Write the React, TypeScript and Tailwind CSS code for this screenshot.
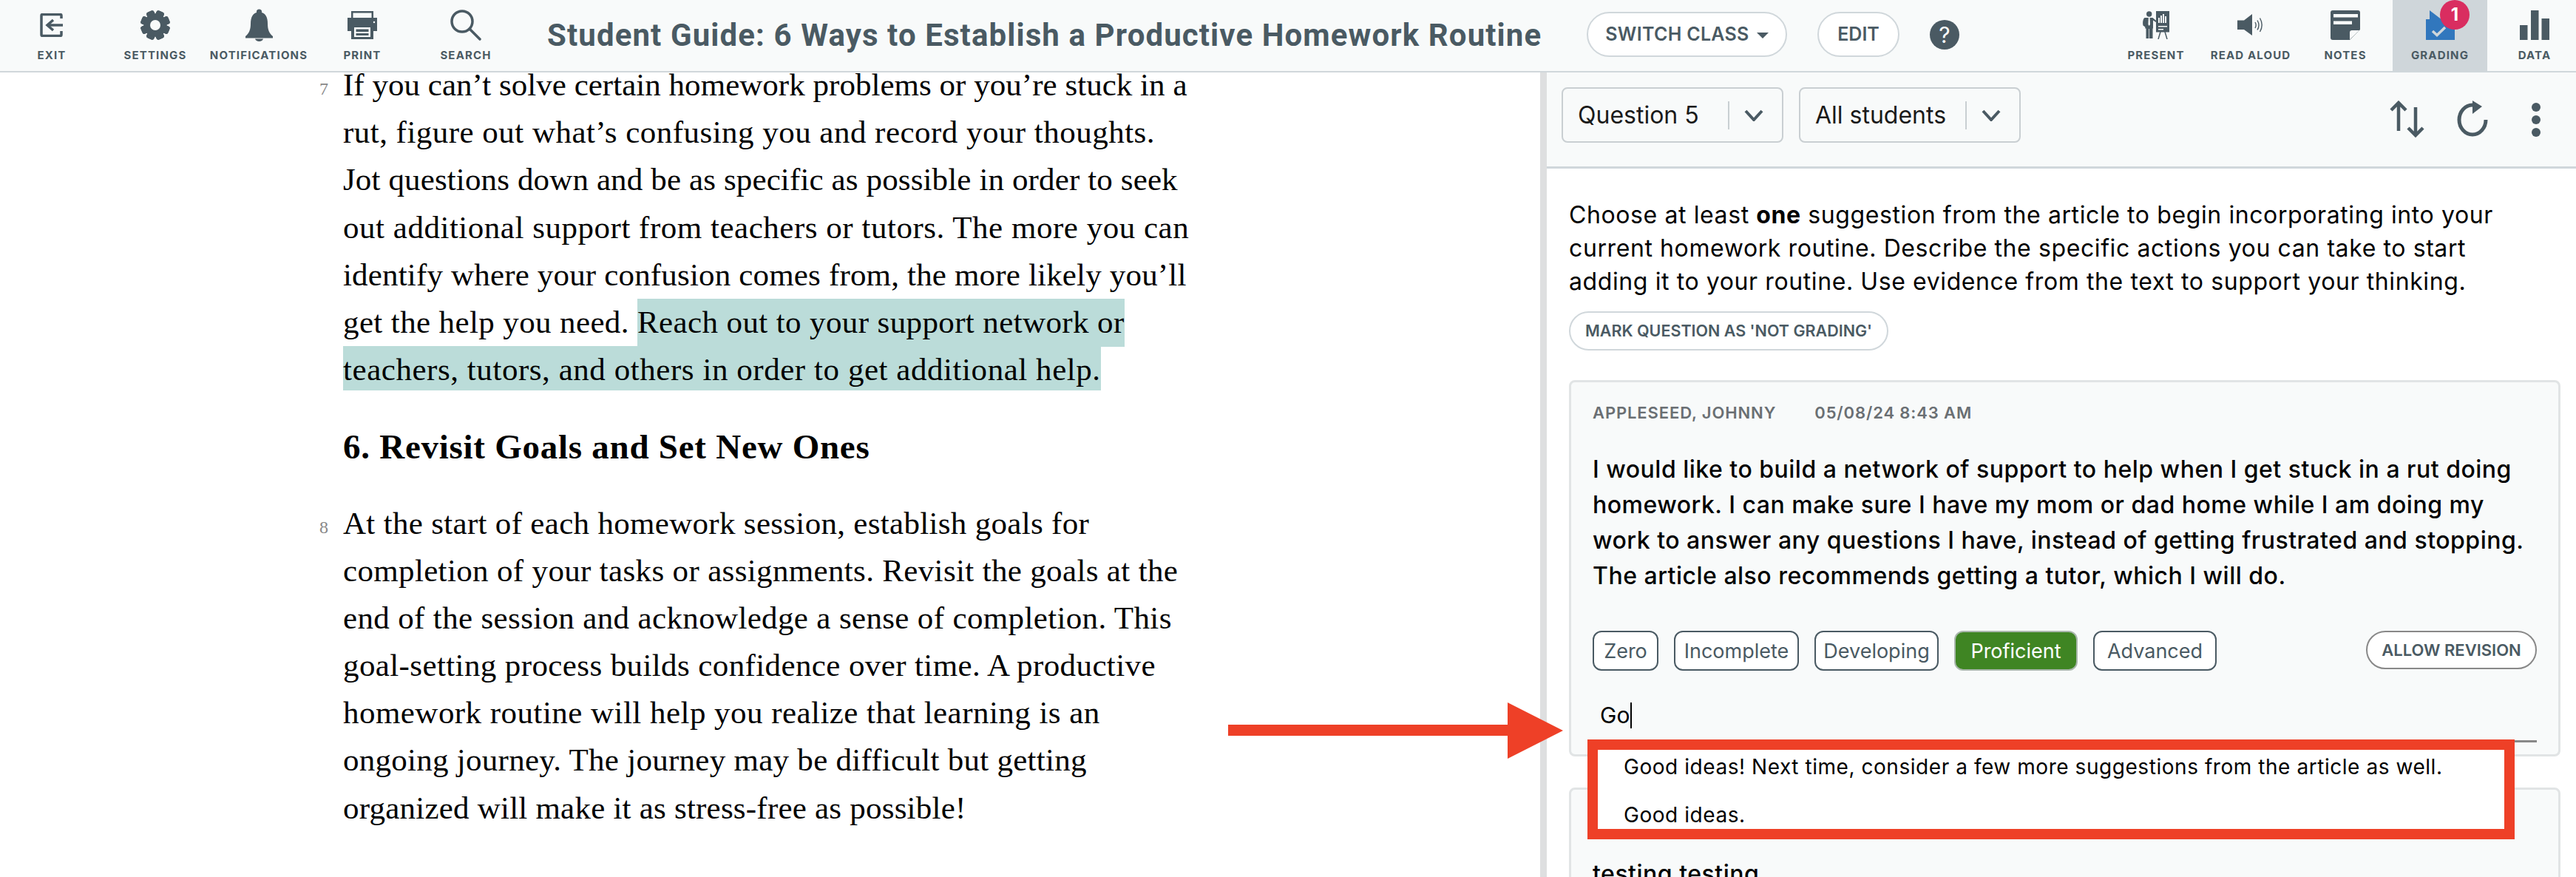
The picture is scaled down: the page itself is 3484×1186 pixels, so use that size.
import type { ReactNode } from 'react';

const SLATE = '#4a5a63';

const PARA_7 = [
  { text: 'If you can’t solve certain homework problems or you’re stuck in a', fit: 'tracking-[0.03px]' },
  { text: 'rut, figure out what’s confusing you and record your thoughts.', fit: 'tracking-[0.47px]' },
  { text: 'Jot questions down and be as specific as possible in order to seek', fit: 'tracking-[0.13px]' },
  { text: 'out additional support from teachers or tutors. The more you can', fit: 'tracking-[0.52px]' },
  { text: 'identify where your confusion comes from, the more likely you’ll', fit: 'tracking-[0.17px]' },
];

const PARA_8 = [
  { text: 'At the start of each homework session, establish goals for', fit: 'tracking-[0.31px]' },
  { text: 'completion of your tasks or assignments. Revisit the goals at the', fit: 'tracking-[0.34px]' },
  { text: 'end of the session and acknowledge a sense of completion. This', fit: 'tracking-[0.35px]' },
  { text: 'goal-setting process builds confidence over time. A productive', fit: 'tracking-[0.39px]' },
  { text: 'homework routine will help you realize that learning is an', fit: 'tracking-[0.46px]' },
  { text: 'ongoing journey. The journey may be difficult but getting', fit: 'tracking-[0.27px]' },
  { text: 'organized will make it as stress-free as possible!', fit: 'tracking-[0.22px]' },
];

const ANSWER = [
  'I would like to build a network of support to help when I get stuck in a rut doing',
  'homework. I can make sure I have my mom or dad home while I am doing my',
  'work to answer any questions I have, instead of getting frustrated and stopping.',
  'The article also recommends getting a tutor, which I will do.',
];

const PROMPT_LINE_2 = 'current homework routine. Describe the specific actions you can take to start';
const PROMPT_LINE_3 = 'adding it to your routine. Use evidence from the text to support your thinking.';

function ExitIcon() {
  return (
    <svg width="32" height="32" viewBox="0 0 32 32" fill="none" stroke={SLATE} strokeWidth="3.5">
      <path d="M29 7V3a1.5 1.5 0 0 0-1.5-1.5h-24A1.5 1.5 0 0 0 2 3v26a1.5 1.5 0 0 0 1.5 1.5h24A1.5 1.5 0 0 0 29 29v-5" />
      <path d="M31 16H10" />
      <path d="M18 9l-8 7 8 7" />
    </svg>
  );
}

function GearIcon() {
  const teeth = [0, 45, 90, 135, 180, 225, 270, 315];
  return (
    <svg width="40" height="40" viewBox="0 0 40 40" fill={SLATE}>
      {teeth.map((a) => (
        <rect key={a} x="14.5" y="0" width="11" height="40" rx="3" transform={`rotate(${a + 22.5} 20 20)`} />
      ))}
      <circle cx="20" cy="20" r="15.5" />
      <circle cx="20" cy="20" r="7" fill="#f8fafa" />
    </svg>
  );
}

function BellIcon() {
  return (
    <svg width="37" height="44" viewBox="0 0 37 44" fill={SLATE}>
      <circle cx="18.5" cy="4" r="3.6" />
      <path d="M18.5 4.5C9.5 4.5 7 12 7 20c0 8-2 13-7 17v2.500h37V37c-5-4-7-9-7-17 0-8-2.500-15.500-11.500-15.500z" />
      <path d="M13 40.500h11c-.6 2-2.800 3.500-5.500 3.500S13.600 42.500 13 40.500z" />
    </svg>
  );
}

function PrintIcon() {
  return (
    <svg width="40" height="38" viewBox="0 0 40 38" fill={SLATE}>
      <path d="M5 0h30v10h-2.500V2.500h-25V10H5z" />
      <path d="M0 9h40v18h-5v-7H5v7H0z" />
      <circle cx="36" cy="15" r="1.200" fill="#f8fafa" />
      <rect x="5" y="20" width="30" height="18" />
      <rect x="9" y="22" width="22" height="13" fill="#f8fafa" />
      <rect x="11.500" y="24.500" width="17" height="3.500" />
      <rect x="11.500" y="30" width="17" height="3" />
    </svg>
  );
}

function SearchIcon() {
  return (
    <svg width="42" height="42" viewBox="0 0 42 42" fill="none" stroke={SLATE} strokeWidth="3.500" strokeLinecap="round">
      <circle cx="16" cy="16" r="14" />
      <path d="M26 26l14 14" />
    </svg>
  );
}

function PresentIcon() {
  return (
    <svg width="36" height="38" viewBox="0 0 36 38" fill={SLATE}>
      <circle cx="8.700" cy="4" r="3.700" />
      <path d="M2.500 9h11l6 5-.8 1.500-4.700-3V23.500h-.5V37H9V24H8.300v13H4.500V23.500H3.300v-2L.5 19.500C-.5 15 .5 10.500 2.500 9z" />
      <path d="M7.800 9h1.800l.4 9-1.300 2-1.300-2z" fill="#f8fafa" />
      <rect x="18" y="0" width="18" height="28.500" />
      <path d="M24 28l-3 10M30 28l3 10" stroke={SLATE} strokeWidth="1.500" fill="none" />
      <g fill="#f8fafa">
        <rect x="21" y="9" width="2" height="7" />
        <rect x="24" y="6" width="2" height="10" />
        <rect x="27" y="4" width="2" height="12" />
        <rect x="30" y="7" width="2" height="9" />
        <rect x="21" y="20" width="12" height="1.500" />
        <rect x="21" y="24" width="7" height="1.500" />
      </g>
    </svg>
  );
}

function SpeakerIcon() {
  return (
    <svg width="36" height="30" viewBox="0 0 36 30" fill={SLATE}>
      <path d="M0 8.500h9L20 0v29L9 21H0z" />
      <g fill="none" stroke={SLATE} strokeWidth="1.400">
        <path d="M24 11c1.500 2.500 1.500 5.500 0 8" />
        <path d="M27 8.500c2.500 4 2.500 9 0 13" />
        <path d="M30.500 5.500c3.500 6 3.500 12.500 0 18.500" />
      </g>
    </svg>
  );
}

function NotesIcon() {
  return (
    <svg width="40" height="40" viewBox="0 0 40 40">
      <path d="M3 0h34a3 3 0 0 1 3 3v23L26 40H3a3 3 0 0 1-3-3V3a3 3 0 0 1 3-3z" fill={SLATE} />
      <rect x="4" y="5" width="33" height="4.500" fill="#f8fafa" />
      <rect x="4" y="14.500" width="25" height="4.500" fill="#f8fafa" />
      <path d="M39 27L26 39.500V30a3 3 0 0 1 3-3z" fill="#f8fafa" />
    </svg>
  );
}

function GradingIcon() {
  return (
    <svg width="39" height="40" viewBox="0 0 39 40">
      <path d="M0 12h5V0l17 13h17v27H0z" fill="#3177bd" />
      <path d="M9 28l6 5.500L26 23" fill="none" stroke="#cfd6da" strokeWidth="3.500" />
    </svg>
  );
}

function DataIcon() {
  return (
    <svg width="40" height="40" viewBox="0 0 40 40" fill={SLATE}>
      <rect x="0" y="20" width="10.500" height="20" />
      <rect x="15" y="0" width="10.500" height="40" />
      <rect x="29.500" y="11" width="10.500" height="29" />
    </svg>
  );
}

function ToolItem({ label, active, children }: { label: string; active?: boolean; children: ReactNode }) {
  return (
    <div className={`relative flex h-[96px] flex-col items-center ${active ? 'bg-[#cfd6da]' : ''}`}>
      <div className="flex h-[66px] w-full items-center justify-center pt-[1px]">{children}</div>
      <span className="whitespace-nowrap text-[15px] font-bold uppercase leading-[18px] tracking-[0.077em] text-[#4a5a63]">
        {label}
      </span>
    </div>
  );
}

function TopBar() {
  return (
    <header className="flex h-[98px] shrink-0 items-start border-b-[2px] border-[#d0d7db] bg-[#f8fafa]">
      <div className="grid w-[700px] shrink-0 grid-cols-5">
        <ToolItem label="Exit"><ExitIcon /></ToolItem>
        <ToolItem label="Settings"><GearIcon /></ToolItem>
        <ToolItem label="Notifications"><BellIcon /></ToolItem>
        <ToolItem label="Print"><PrintIcon /></ToolItem>
        <ToolItem label="Search"><SearchIcon /></ToolItem>
      </div>
      <h1 className="ml-[40px] w-[1344px] shrink-0 whitespace-nowrap font-['Roboto',sans-serif] text-[42px] font-bold leading-[96px] tracking-[1.1px] text-[#4a5a63]">
        Student Guide: 6 Ways to Establish a Productive Homework Routine
      </h1>
      <button className="ml-[62px] mt-[16px] flex h-[61px] w-[271px] shrink-0 items-center justify-center gap-[10px] rounded-full border-[2px] border-[#d0d7db] bg-white text-[25px] font-semibold tracking-[0.3px] text-[#4a5a63]">
        SWITCH CLASS
        <span className="mt-[3px] h-0 w-0 border-x-[8px] border-t-[8px] border-x-transparent border-t-[#4a5a63]" />
      </button>
      <button className="ml-[41px] mt-[16px] flex h-[61px] w-[111px] shrink-0 items-center justify-center rounded-full border-[2px] border-[#d0d7db] bg-white text-[25px] font-semibold text-[#4a5a63]">
        EDIT
      </button>
      <span className="ml-[41px] mt-[27px] flex h-[40px] w-[40px] shrink-0 items-center justify-center rounded-full bg-[#4a5a63] text-[30px] font-normal text-white">
        ?
      </span>
      <div className="ml-auto grid w-[640px] shrink-0 grid-cols-5 -mr-[8px]">
        <ToolItem label="Present"><PresentIcon /></ToolItem>
        <ToolItem label="Read Aloud"><SpeakerIcon /></ToolItem>
        <ToolItem label="Notes"><NotesIcon /></ToolItem>
        <ToolItem label="Grading" active>
          <GradingIcon />
          <span className="absolute left-[64px] top-0 flex h-[40px] w-[40px] items-center justify-center rounded-full bg-[#d92d60] text-[24px] font-bold text-white">
            1
          </span>
        </ToolItem>
        <ToolItem label="Data"><DataIcon /></ToolItem>
      </div>
    </header>
  );
}

function ArticleLine({ fit, children }: { fit: string; children: ReactNode }) {
  return <div className={`h-[64.2px] whitespace-nowrap ${fit}`}>{children}</div>;
}

function Article() {
  return (
    <section className="w-[2083px] shrink-0 overflow-hidden bg-white font-['Liberation_Serif',serif] text-[43px] leading-[64.2px] text-black">
      <div className="relative -mt-[15px] ml-[464px]">
        <span className="absolute -left-[32px] top-[5px] text-[24px] text-[#888]">7</span>
        {PARA_7.map((line) => (
          <ArticleLine key={line.text} fit={line.fit}>{line.text}</ArticleLine>
        ))}
        <ArticleLine fit="tracking-[0.38px]">
          get the help you need.{' '}
          <mark className="inline-block h-[65px] bg-[#bbdcd9] text-black">Reach out to your support network or</mark>
        </ArticleLine>
        <ArticleLine fit="tracking-[0.55px]">
          <mark className="inline-block h-[60px] bg-[#bbdcd9] text-black">teachers, tutors, and others in order to get additional help.</mark>
        </ArticleLine>
        <h2 className="mt-[40px] text-[47px] font-bold leading-[64.2px] tracking-[0.74px]">6. Revisit Goals and Set New Ones</h2>
        <div className="relative mt-[39px]">
          <span className="absolute -left-[32px] top-[5px] text-[24px] text-[#888]">8</span>
          {PARA_8.map((line) => (
            <ArticleLine key={line.text} fit={line.fit}>{line.text}</ArticleLine>
          ))}
        </div>
      </div>
    </section>
  );
}

function Select({ label }: { label: string }) {
  return (
    <div className="relative flex h-[75px] w-[300px] items-center rounded-[8px] border-[2px] border-[#c9cfd2] pl-[20px] text-[32px] text-[#1a1a1a]">
      {label}
      <span className="absolute left-[223px] top-[17px] h-[38px] w-[2px] bg-[#c9cfd2]" />
      <svg className="absolute right-[25px] top-[28px]" width="26" height="16" viewBox="0 0 26 16" fill="none" stroke={SLATE} strokeWidth="4">
        <path d="M2 2l11 12L24 2" />
      </svg>
    </div>
  );
}

function GradeButton({ label, width, active }: { label: string; width: string; active?: boolean }) {
  return (
    <button
      className={`flex h-[54px] shrink-0 items-center justify-center rounded-[12px] border-[2px] text-[27px] ${width} ${
        active ? 'border-[#aab7ad] bg-[#3f8523] text-white' : 'border-[#4a5a63] bg-white text-[#4a5a63]'
      }`}
    >
      {label}
    </button>
  );
}

function GradingPanel() {
  return (
    <section className="flex min-w-0 flex-1 flex-col overflow-hidden border-l-[9px] border-[#dedfe0] bg-white font-['Inter',sans-serif] text-black">
      <div className="flex h-[130px] shrink-0 items-start justify-between border-b-[3px] border-[#d0d7db] bg-[#f8fafa] pl-[20px]">
        <div className="mt-[20px] flex gap-[21px]">
          <Select label="Question 5" />
          <Select label="All students" />
        </div>
        <div className="flex items-start">
          <svg className="mt-[38px]" width="50" height="50" viewBox="0 0 50 50" fill="none" stroke={SLATE} strokeWidth="4.500">
            <path d="M13 3v38M3 13L13 3l10 10" />
            <path d="M36 9v38M26 37l10 10 10-10" />
          </svg>
          <svg className="ml-[42px] mt-[38px]" width="42" height="50" viewBox="0 0 42 50" fill="none" stroke={SLATE} strokeWidth="5">
            <path d="M39 26a18 20 0 1 1-18-20h3" />
            <path d="M21 0l13 8-13 10z" fill={SLATE} stroke="none" />
          </svg>
          <svg className="ml-[58px] mr-[47px] mt-[41px]" width="14" height="46" viewBox="0 0 14 46" fill={SLATE}>
            <circle cx="7" cy="6" r="6" />
            <circle cx="7" cy="23" r="6" />
            <circle cx="7" cy="40" r="6" />
          </svg>
        </div>
      </div>

      <div className="pl-[30px] pr-[21px] pt-[40px] text-[32px] leading-[45px]">
        <p className="whitespace-nowrap tracking-[0.6px]">
          Choose at least <b>one</b> suggestion from the article to begin incorporating into your
          <br />
          {PROMPT_LINE_2}
          <br />
          {PROMPT_LINE_3}
        </p>
        <button className="mt-[18px] flex h-[53px] w-[432px] items-center justify-center rounded-full border-[2px] border-[#d0d7db] bg-white text-[21.5px] font-semibold text-[#4a5a63]">
          MARK QUESTION AS 'NOT GRADING'
        </button>

        <div className="mt-[40px] h-[509px] rounded-[8px] border-[3px] border-[#e1e4e5] bg-[#f8fafa] px-[29px] pt-[26px]">
          <div className="flex gap-[52px] text-[22px] font-semibold leading-[30px] tracking-[0.04em] text-[#6a6f73]">
            <span>APPLESEED, JOHNNY</span>
            <span>05/08/24 8:43 AM</span>
          </div>
          <div className="mt-[38px] whitespace-nowrap font-medium leading-[48px] tracking-[0.5px]">
            {ANSWER.map((line) => (
              <div key={line}>{line}</div>
            ))}
          </div>
          <div className="mt-[50px] flex items-start gap-[21px]">
            <GradeButton label="Zero" width="w-[89px]" />
            <GradeButton label="Incomplete" width="w-[169px]" />
            <GradeButton label="Developing" width="w-[168px]" />
            <GradeButton label="Proficient" width="w-[167px]" active />
            <GradeButton label="Advanced" width="w-[167px]" />
            <button className="ml-auto flex h-[52px] w-[231px] items-center justify-center rounded-full border-[2px] border-[#888] bg-white text-[22px] font-semibold text-[#4a5a63]">
              ALLOW REVISION
            </button>
          </div>
          <div className="relative mt-[27px] flex h-[70px] items-center border-b-[3px] border-[#888] pl-[10px] text-[30px]">
            Go<span className="ml-[1px] h-[35px] w-[2px] bg-black" />
            {/* annotated suggestion list */}
            <div className="absolute left-[-7px] top-[66px] h-[135px] w-[1254px] border-[14px] border-[#ee4027] bg-white pl-[35px] pt-[3px] text-[28px] leading-[40px] tracking-[0.55px]">
              <div className="whitespace-nowrap">Good ideas! Next time, consider a few more suggestions from the article as well.</div>
              <div className="mt-[25px]">Good ideas.</div>
            </div>
          </div>
        </div>

        <div className="mt-[42px] h-[200px] rounded-[8px] border-[3px] border-[#e1e4e5] bg-[#f8fafa] px-[29px] pt-[91px] font-medium tracking-[0.5px]">
          testing testing
        </div>
      </div>
    </section>
  );
}

export default function App() {
  return (
    <div className="relative flex h-[1186px] w-[3484px] flex-col overflow-hidden bg-white font-['Inter',sans-serif]">
      <TopBar />
      <main className="flex min-h-0 flex-1">
        <Article />
        <GradingPanel />
      </main>
      {/* red annotation arrow */}
      <svg className="absolute left-[1661px] top-[950px]" width="453" height="76" viewBox="0 0 453 76" fill="#ee4027">
        <path d="M0 30h378V0l75 38-75 38V45H0z" />
      </svg>
    </div>
  );
}
